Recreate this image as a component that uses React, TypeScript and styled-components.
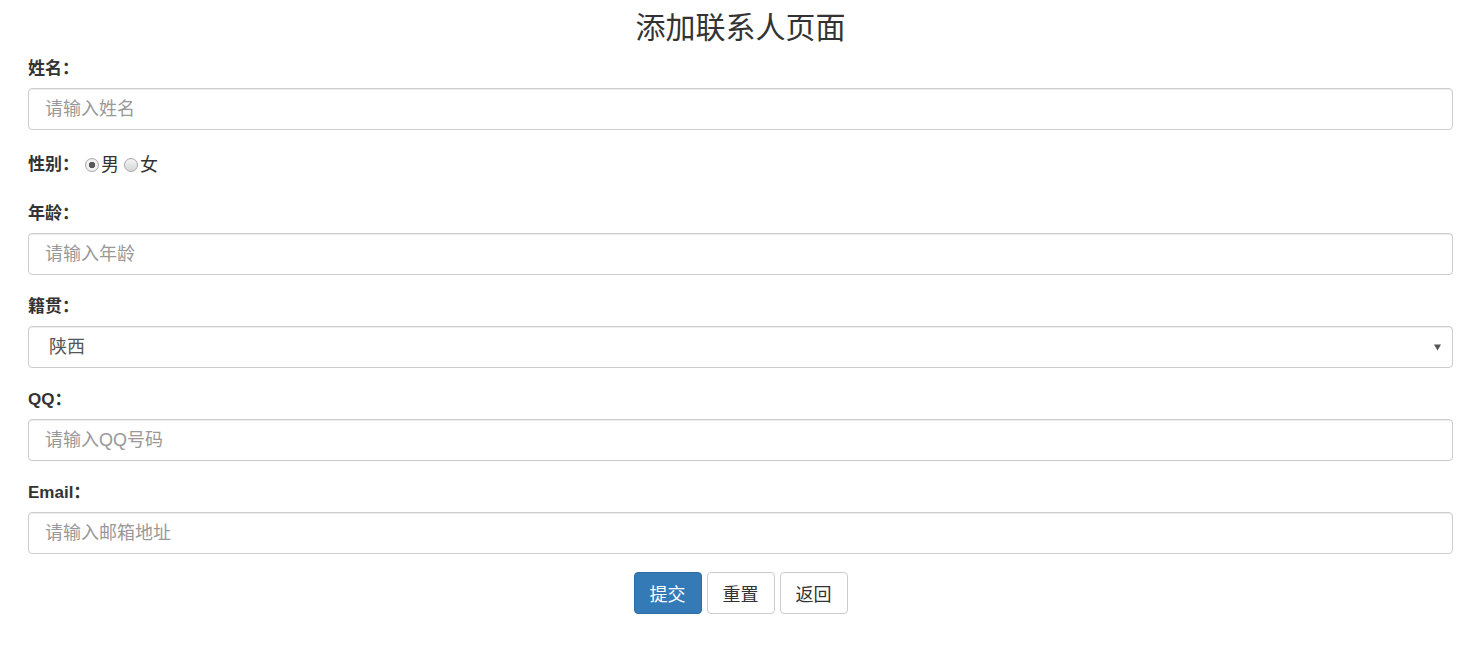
import styled, { createGlobalStyle } from "styled-components";

const GlobalStyle = createGlobalStyle`
    * {
        box-sizing: border-box;
    }
    body {
        margin: 0;
        background: #fff;
        color: #333;
        font-family: "Liberation Sans", "Noto Sans CJK SC", sans-serif;
    }
`

const provinces = ['陕西', '北京', '上海', '广东', '四川'];

export default function App() {
    return (
        <>
            <GlobalStyle/>
            <Page>
                <Title>添加联系人页面</Title>
                <form onSubmit={e => e.preventDefault()}>
                    <FormGroup>
                        <Label htmlFor="name">姓名：</Label>
                        <Input id="name" type="text" placeholder="请输入姓名"/>
                    </FormGroup>
                    <RadioGroup>
                        <InlineLabel>性别：</InlineLabel>
                        <RadioOption>
                            <Radio type="radio" name="gender" value="男" defaultChecked/>男
                        </RadioOption>
                        <RadioOption>
                            <Radio type="radio" name="gender" value="女"/>女
                        </RadioOption>
                    </RadioGroup>
                    <FormGroup>
                        <Label htmlFor="age">年龄：</Label>
                        <Input id="age" type="text" placeholder="请输入年龄"/>
                    </FormGroup>
                    <FormGroup>
                        <Label htmlFor="address">籍贯：</Label>
                        <SelectWrapper>
                            <Select id="address" defaultValue="陕西">
                                {provinces.map(p => <option key={p} value={p}>{p}</option>)}
                            </Select>
                            <Caret viewBox="0 0 8 7" aria-hidden="true">
                                <path d="M0 0 H8 L4 7 Z" fill="#555"/>
                            </Caret>
                        </SelectWrapper>
                    </FormGroup>
                    <FormGroup>
                        <Label htmlFor="qq">QQ：</Label>
                        <Input id="qq" type="text" placeholder="请输入QQ号码"/>
                    </FormGroup>
                    <FormGroup>
                        <Label htmlFor="email">Email：</Label>
                        <Input id="email" type="text" placeholder="请输入邮箱地址"/>
                    </FormGroup>
                    <ButtonsSection>
                        <Button type="submit" $primary>提交</Button>
                        <Button type="reset">重置</Button>
                        <Button type="button">返回</Button>
                    </ButtonsSection>
                </form>
            </Page>
        </>
    )
}

const Page = styled.div`
    padding: 8px 28px 40px 28px;
`

const Title = styled.h1`
    margin: 0 0 10px 0;
    text-align: center;
    font-size: 30px;
    font-weight: 400;
    line-height: 40px;
    color: #333;
`

const FormGroup = styled.div`
    margin-bottom: 21px;
`

const Label = styled.label`
    display: block;
    margin-bottom: 8px;
    font-size: 17px;
    font-weight: 700;
    line-height: 22px;
    color: #333;
`

const InlineLabel = styled.span`
    margin-right: 6px;
    font-size: 17px;
    font-weight: 700;
    line-height: 28px;
`

const RadioGroup = styled.div`
    display: flex;
    align-items: center;
    height: 28px;
    margin-bottom: 24px;
`

const RadioOption = styled.label`
    display: flex;
    align-items: center;
    margin-right: 5px;
    font-size: 18px;
    line-height: 28px;
    color: #333;
`

const Radio = styled.input`
    appearance: none;
    flex: none;
    width: 14px;
    height: 14px;
    margin: 0 2px 0 0;
    border: 1px solid #a6a6a6;
    border-radius: 50%;
    background: linear-gradient(#f4f4f4, #d6d6d6);

    &:checked {
        background: radial-gradient(circle, #5a5a5a 0 3px, #f0f0f0 3.5px);
    }
`

const fieldStyle = `
    display: block;
    width: 100%;
    height: 42px;
    padding: 0 16px;
    font-family: "Liberation Sans", "Noto Sans CJK SC", sans-serif;
    font-size: 18px;
    color: #555;
    background: #fff;
    border: 1px solid #ccc;
    border-radius: 4px;
    box-shadow: inset 0 1px 1px rgba(0, 0, 0, .075);
    outline: none;
`

const Input = styled.input`
    ${fieldStyle}

    &::placeholder {
        color: #999;
    }
`

const SelectWrapper = styled.div`
    position: relative;
`

const Select = styled.select`
    ${fieldStyle}
    appearance: none;
    padding-left: 20px;
`

const Caret = styled.svg`
    position: absolute;
    right: 12px;
    top: 18px;
    width: 7px;
    height: 7px;
    pointer-events: none;
`

const ButtonsSection = styled.div`
    display: flex;
    justify-content: center;
    gap: 5px;
    margin-top: -3px;
`

const Button = styled.button<{ $primary?: boolean }>`
    height: 42px;
    padding: 0 15px;
    font-family: "Liberation Sans", "Noto Sans CJK SC", sans-serif;
    font-size: 18px;
    border-radius: 4px;
    cursor: pointer;
    color: ${p => p.$primary ? '#fff' : '#333'};
    background: ${p => p.$primary ? '#337ab7' : '#fff'};
    border: 1px solid ${p => p.$primary ? '#2e6da4' : '#ccc'};
`
